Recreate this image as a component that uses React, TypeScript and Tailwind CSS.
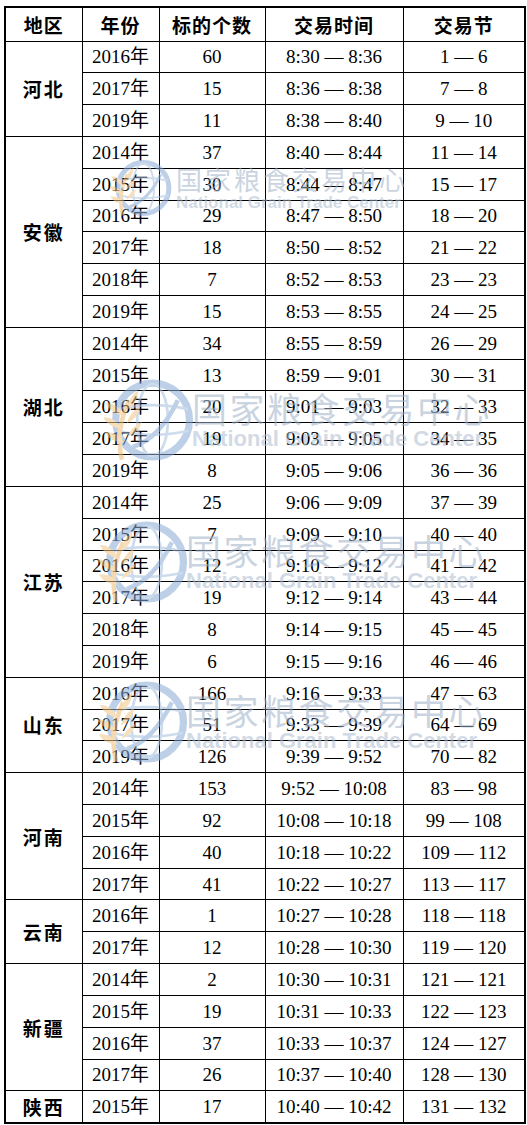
import React from 'react';

type Row = [string, string, string, string];
type Group = { region: string; rows: Row[] };

const groups: Group[] = [
  {
    region: '河北',
    rows: [
      ['2016年', '60', '8:30 — 8:36', '1 — 6'],
      ['2017年', '15', '8:36 — 8:38', '7 — 8'],
      ['2019年', '11', '8:38 — 8:40', '9 — 10'],
    ],
  },
  {
    region: '安徽',
    rows: [
      ['2014年', '37', '8:40 — 8:44', '11 — 14'],
      ['2015年', '30', '8:44 — 8:47', '15 — 17'],
      ['2016年', '29', '8:47 — 8:50', '18 — 20'],
      ['2017年', '18', '8:50 — 8:52', '21 — 22'],
      ['2018年', '7', '8:52 — 8:53', '23 — 23'],
      ['2019年', '15', '8:53 — 8:55', '24 — 25'],
    ],
  },
  {
    region: '湖北',
    rows: [
      ['2014年', '34', '8:55 — 8:59', '26 — 29'],
      ['2015年', '13', '8:59 — 9:01', '30 — 31'],
      ['2016年', '20', '9:01 — 9:03', '32 — 33'],
      ['2017年', '19', '9:03 — 9:05', '34 — 35'],
      ['2019年', '8', '9:05 — 9:06', '36 — 36'],
    ],
  },
  {
    region: '江苏',
    rows: [
      ['2014年', '25', '9:06 — 9:09', '37 — 39'],
      ['2015年', '7', '9:09 — 9:10', '40 — 40'],
      ['2016年', '12', '9:10 — 9:12', '41 — 42'],
      ['2017年', '19', '9:12 — 9:14', '43 — 44'],
      ['2018年', '8', '9:14 — 9:15', '45 — 45'],
      ['2019年', '6', '9:15 — 9:16', '46 — 46'],
    ],
  },
  {
    region: '山东',
    rows: [
      ['2016年', '166', '9:16 — 9:33', '47 — 63'],
      ['2017年', '51', '9:33 — 9:39', '64 — 69'],
      ['2019年', '126', '9:39 — 9:52', '70 — 82'],
    ],
  },
  {
    region: '河南',
    rows: [
      ['2014年', '153', '9:52 — 10:08', '83 — 98'],
      ['2015年', '92', '10:08 — 10:18', '99 — 108'],
      ['2016年', '40', '10:18 — 10:22', '109 — 112'],
      ['2017年', '41', '10:22 — 10:27', '113 — 117'],
    ],
  },
  {
    region: '云南',
    rows: [
      ['2016年', '1', '10:27 — 10:28', '118 — 118'],
      ['2017年', '12', '10:28 — 10:30', '119 — 120'],
    ],
  },
  {
    region: '新疆',
    rows: [
      ['2014年', '2', '10:30 — 10:31', '121 — 121'],
      ['2015年', '19', '10:31 — 10:33', '122 — 123'],
      ['2016年', '37', '10:33 — 10:37', '124 — 127'],
      ['2017年', '26', '10:37 — 10:40', '128 — 130'],
    ],
  },
  {
    region: '陕西',
    rows: [['2015年', '17', '10:40 — 10:42', '131 — 132']],
  },
];

const headers = ['地区', '年份', '标的个数', '交易时间', '交易节'];

const cell = "border border-black text-center align-middle p-0 h-[31.82px] text-[19px] leading-none font-['Liberation_Serif','Noto_Sans_CJK_SC',serif] text-black";

// watermark logo: globe ring with wheat ears on the left
const Logo: React.FC<{ className: string }> = ({ className }) => (
  <svg viewBox="0 0 100 100" className={className}>
    <circle cx="54" cy="50" r="41" fill="none" stroke="#88aad4" strokeWidth="8" />
    <ellipse cx="54" cy="50" rx="17" ry="40" fill="none" stroke="#a6c0df" strokeWidth="3" />
    <path d="M15 38 Q54 29 93 38 M14 62 Q54 71 94 62" fill="none" stroke="#a6c0df" strokeWidth="3" />
    <path d="M32 80 Q62 70 82 28" fill="none" stroke="#88aad4" strokeWidth="5" />
    <path d="M20 94 Q12 62 28 28" fill="none" stroke="#eebb72" strokeWidth="5" />
    <path d="M22 46 q-15 -4 -20 -15 q14 0 20 15 z M20 60 q-15 -2 -21 -13 q13 -1 21 13 z M22 75 q-15 0 -21 -11 q14 -2 21 11 z M27 38 q11 -8 11 -21 q-11 7 -11 21 z M25 54 q13 -6 15 -19 q-11 6 -15 19 z M26 69 q13 -5 16 -17 q-11 5 -16 17 z" fill="#f1c584" />
  </svg>
);

const WatermarkSmall: React.FC<{ className: string }> = ({ className }) => (
  <div className={`absolute pointer-events-none flex items-center opacity-55 ${className}`}>
    <Logo className="w-[62px] h-[62px] mr-[4px]" />
    <div className="flex flex-col items-start">
      <span className="text-[26px] leading-none tracking-[3px] text-[#9fb2c8] font-['Noto_Sans_CJK_SC',sans-serif]">国家粮食交易中心</span>
      <span className="mt-[2px] text-[17px] leading-none font-bold text-[#aebdd0] font-['Liberation_Sans',sans-serif]">National Grain Trade Center</span>
    </div>
  </div>
);

const WatermarkLarge: React.FC<{ className: string }> = ({ className }) => (
  <div className={`absolute pointer-events-none flex items-center opacity-55 ${className}`}>
    <Logo className="w-[90px] h-[90px] -mr-[2px]" />
    <div className="flex flex-col items-start">
      <span className="text-[35px] leading-none tracking-[2.5px] text-[#9fb2c8] font-['Noto_Sans_CJK_SC',sans-serif]">国家粮食交易中心</span>
      <span className="mt-[3px] text-[22px] leading-none font-bold text-[#aebdd0] font-['Liberation_Sans',sans-serif]">National Grain Trade Center</span>
    </div>
  </div>
);

export default function App() {
  return (
    <div className="w-[527px] h-[1125px] bg-white relative overflow-hidden">
      <table className="table-fixed border-collapse border-2 border-black ml-[4px] mt-[6px] w-[520px]">
        <colgroup>
          <col className="w-[77px]" />
          <col className="w-[77px]" />
          <col className="w-[106px]" />
          <col className="w-[138px]" />
          <col className="w-[122px]" />
        </colgroup>
        <thead>
          <tr>
            {headers.map((h) => (
              <th
                key={h}
                className="border border-black text-center align-middle p-0 h-[34px] text-[19px] leading-none font-bold text-black font-['Noto_Sans_CJK_SC',sans-serif] tracking-[1px]"
              >
                {h}
              </th>
            ))}
          </tr>
        </thead>
        <tbody>
          {groups.map((g) =>
            g.rows.map((r, i) => (
              <tr key={g.region + i}>
                {i === 0 && (
                  <td
                    rowSpan={g.rows.length}
                    className="border border-black text-center align-middle p-0 text-[19px] leading-none font-bold text-black font-['Noto_Sans_CJK_SC',sans-serif] tracking-[2px]"
                  >
                    {g.region}
                  </td>
                )}
                {r.map((v, j) => (
                  <td key={j} className={cell}>
                    {v}
                  </td>
                ))}
              </tr>
            ))
          )}
        </tbody>
      </table>

      <WatermarkSmall className="left-[110px] top-[157px]" />
      <WatermarkLarge className="left-[104px] top-[375px]" />
      <WatermarkLarge className="left-[98px] top-[517px]" />
      <WatermarkLarge className="left-[98px] top-[677px]" />
    </div>
  );
}
